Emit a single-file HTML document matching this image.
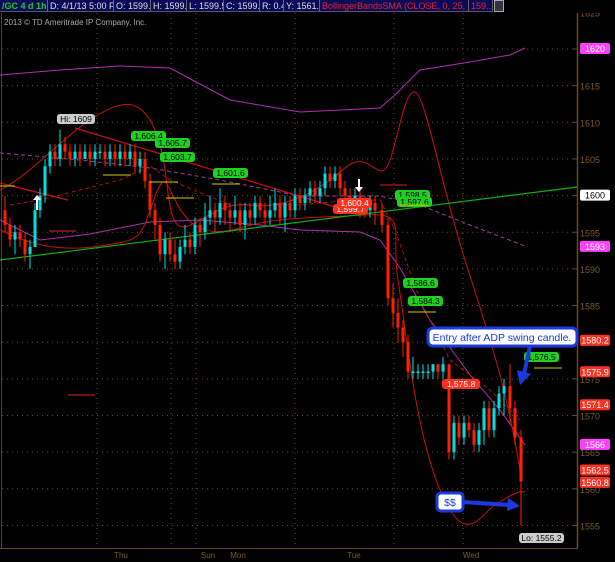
<!DOCTYPE html>
<html><head><meta charset="utf-8"><style>
body{margin:0;background:#000;width:615px;height:562px;overflow:hidden;font-family:"Liberation Sans",sans-serif}
#top{position:absolute;left:0;top:0;width:615px;height:13px;background:#000;font-size:9px;z-index:2}
#top div{position:absolute;top:0;height:12px;background:#0a0a5a;border-right:1px solid #666;border-bottom:1px solid #555;line-height:12px;color:#ddd;white-space:nowrap;overflow:hidden;padding-left:2px;box-sizing:border-box}
</style></head><body>
<div id="top">
<div style="left:0;width:48px;color:#2c2;font-weight:bold">/GC 4 d 1h</div>
<div style="left:48px;width:66px">D: 4/1/13 5:00 PM</div>
<div style="left:114px;width:37px">O: 1599.7</div>
<div style="left:151px;width:36px">H: 1599.9</div>
<div style="left:187px;width:37px">L: 1599.5</div>
<div style="left:224px;width:36px">C: 1599.7</div>
<div style="left:260px;width:24px">R: 0.4</div>
<div style="left:284px;width:36px">Y: 1561.8</div>
<div style="left:320px;width:149px;color:#e22">BollingerBandsSMA (CLOSE, 0, 25, -2.0, 2.0)</div>
<div style="left:469px;width:24px;color:#e22">159...</div>
<div style="left:494px;width:10px;background:#334;border:1px solid #aaa"></div>
</div>
<svg id="s" width="615" height="562" style="position:absolute;left:0;top:0" xmlns="http://www.w3.org/2000/svg" font-family="Liberation Sans, sans-serif">
</svg>
<script>
const s=document.getElementById('s');let h='';
const Y=p=>49+(1620-p)*7.33;
h+='<rect x="0" y="13" width="615" height="549" fill="#000"/>';
h+='<line x1="1.5" y1="13" x2="1.5" y2="548" stroke="#5a3f1a"/>';
h+='<line x1="577.5" y1="13" x2="577.5" y2="548" stroke="#6a4a20" stroke-width="1.5"/>';
h+='<line x1="0" y1="548.5" x2="578" y2="548.5" stroke="#6a4a20"/>';
h+='<text x="4" y="25" fill="#aaa" font-size="8">2013 © TD Ameritrade IP Company, Inc.</text>';
for(let p=1555;p<=1625;p+=5){const y=Y(p);h+=`<line x1="2" y1="${y}" x2="572" y2="${y}" stroke="#6a4a20" stroke-dasharray="1,4"/><line x1="572" y1="${y}" x2="577" y2="${y}" stroke="#6a4a20"/><text x="580" y="${y+4}" fill="#7a5a2a" font-size="9">${p}</text>`;}
[97,171,196,295,394,463].forEach(x=>h+=`<line x1="${x}" y1="13" x2="${x}" y2="548" stroke="#6a4a20" stroke-dasharray="1,4"/>`);
[['Thu',121],['Sun',208],['Mon',238],['Tue',354],['Wed',471]].forEach(a=>h+=`<text x="${a[1]}" y="558" fill="#7a5a2a" font-size="8" text-anchor="middle">${a[0]}</text>`);
h+='<polyline fill="none" stroke="#b030b0" points="0,75 60,70 120,66 170,68 230,100 300,112 380,108 395,95 420,70 470,62 510,55 525,48"/>';
h+='<polyline fill="none" stroke="#b030b0" points="0,220 40,240 90,234 150,222 200,220 260,225 300,230 360,232 380,240 400,268 430,320 470,375 500,410 525,445"/>';
h+='<polyline fill="none" stroke="#a040a0" stroke-dasharray="4,3" points="0,153 80,160 150,168 220,180 300,196 380,196 420,205 470,225 525,246"/>';
h+='<path fill="none" stroke="#c81010" d="M0,190 C30,175 60,140 90,120 S140,95 155,130 S165,215 178,225 S215,200 250,205 S320,190 345,168 S380,190 390,160 S405,90 415,92 S440,180 465,260 S505,380 520,470"/>';
h+='<path fill="none" stroke="#c81010" d="M0,230 C30,245 60,252 100,246 S140,240 152,205 S165,180 175,200 S200,240 240,228 S320,218 365,215 S390,230 398,280 S415,430 440,490 S480,515 495,505 S520,490 525,492"/>';
h+='<polyline fill="none" stroke="#b01010" stroke-dasharray="4,3" points="10,205 40,200 80,190 120,180 150,166 170,180 230,205 300,205 350,200 380,200 395,230 420,300 450,360 490,390 520,420"/>';
h+='<line x1="0" y1="260" x2="577" y2="187" stroke="#10b010" stroke-width="1.2"/>';
h+='<line x1="75" y1="128" x2="355" y2="213" stroke="#c81010" stroke-width="1.2"/>';
h+='<line x1="0" y1="183" x2="68" y2="200" stroke="#c81010" stroke-width="1.2"/>';
const C=[[5,1598,1596,1600,1595],[10,1596,1594,1597,1593],[15,1594,1595,1596,1592],[20,1595,1594,1596,1593],[25,1594,1592,1595,1591],[30,1592,1593,1594,1590],[35,1593,1598,1599,1593],[40,1598,1600,1601,1597],[45,1600,1604,1605,1599],[50,1604,1606,1607,1603],[55,1606,1605,1607,1604],[60,1605,1607,1609,1604],[65,1607,1606,1608,1605],[70,1606,1605,1607,1604],[75,1605,1606,1607,1604],[80,1606,1605,1607,1604],[85,1605,1606,1607,1605],[90,1606,1605,1607,1604],[95,1605,1606,1607,1604],[100,1606,1606,1607,1605],[105,1606,1605,1607,1604],[110,1605,1606,1607,1604],[115,1606,1605,1607,1604],[120,1605,1606,1607,1604],[125,1606,1605,1607,1604],[130,1605,1606,1607,1604],[135,1606,1604,1607,1603],[140,1604,1605,1606,1603],[145,1605,1602,1606,1601],[150,1602,1598,1603,1597],[155,1598,1596,1599,1594],[160,1596,1592,1597,1591],[165,1592,1594,1595,1590],[170,1594,1592,1595,1591],[175,1592,1591,1594,1590],[180,1591,1593,1594,1590],[185,1593,1594,1596,1592],[190,1594,1593,1595,1592],[195,1593,1596,1597,1592],[200,1596,1595,1597,1593],[205,1595,1597,1599,1594],[210,1597,1598,1600,1596],[215,1598,1597,1599,1595],[220,1597,1599,1601,1596],[225,1599,1598,1600,1596],[230,1598,1597,1599,1595],[235,1597,1598,1600,1596],[240,1598,1596,1599,1595],[245,1596,1598,1599,1594],[250,1598,1597,1599,1596],[255,1597,1599,1600,1596],[260,1599,1598,1600,1597],[265,1598,1597,1599,1596],[270,1597,1598,1600,1596],[275,1598,1599,1601,1597],[280,1599,1597,1600,1596],[285,1597,1599,1600,1595],[290,1599,1598,1600,1597],[295,1598,1600,1601,1597],[300,1600,1599,1601,1598],[305,1599,1600,1601,1598],[310,1600,1601,1602,1599],[315,1601,1600,1602,1599],[320,1600,1601,1602,1599],[325,1601,1603,1604,1600],[330,1603,1602,1604,1601],[335,1602,1603,1604,1601],[340,1603,1601,1604,1600],[345,1601,1600,1602,1599],[350,1600,1599,1601,1598],[355,1599,1600,1601,1598],[360,1600,1599,1601,1597],[365,1599,1598,1600,1597],[370,1598,1599,1600,1597],[375,1599,1598,1600,1596],[382,1598,1596,1599,1595],[388,1596,1586,1597,1585],[393,1586,1584,1588,1582],[398,1584,1582,1586,1580],[403,1582,1580,1583,1578],[408,1580,1576,1581,1575],[413,1576,1576,1578,1575],[418,1576,1576,1577,1575],[423,1576,1576,1577,1575],[428,1576,1576,1577,1575],[433,1576,1577,1577,1575],[438,1577,1576,1577,1575],[443,1576,1577,1578,1575],[449,1577,1565,1577,1564],[454,1565,1569,1570,1564],[459,1569,1567,1570,1566],[464,1567,1569,1570,1566],[469,1569,1568,1570,1567],[474,1568,1566,1569,1565],[479,1566,1568,1569,1565],[484,1568,1571,1572,1566],[489,1571,1568,1572,1567],[494,1568,1571,1572,1567],[499,1571,1573,1574,1570],[504,1573,1574,1575,1570],[510,1574,1571,1577,1569],[515,1571,1567,1572,1566],[521,1567,1561,1568,1555]];
C.forEach(c=>{const[x,o,cl,hi,lo]=c;const col=cl>=o?'#00e0e0':'#ff2000';const t=Y(Math.max(o,cl)),b=Y(Math.min(o,cl));h+=`<line x1="${x}" y1="${Y(hi)}" x2="${x}" y2="${Y(lo)}" stroke="${col}"/><rect x="${x-1.5}" y="${t}" width="3" height="${Math.max(1.5,b-t)}" fill="${col}"/>`;});
const lab=(x,y,t,bg,fg,w)=>{h+=`<rect x="${x}" y="${y}" width="${w}" height="10" rx="3" fill="${bg}"/><text x="${x+w/2}" y="${y+8}" fill="${fg}" font-size="8.5" text-anchor="middle">${t}</text>`;};
lab(57,114,'Hi: 1609','#ccc','#000',38);
lab(131,131,'1,606.4','#20d020','#000',35);lab(155,138,'1,605.7','#20d020','#000',35);lab(160,152,'1,603.7','#20d020','#000',35);lab(213,168,'1,601.6','#20d020','#000',35);
lab(395,190,'1,598.5','#20d020','#000',35);lab(397,197,'1,597.6','#20d020','#000',35);
lab(333,204,'1,599.7','#ff3020','#fff',35);lab(337,198,'1,600.4','#ff3020','#fff',35);
lab(403,278,'1,586.6','#20d020','#000',35);lab(408,296,'1,584.3','#20d020','#000',35);
lab(442,379,'1,575.8','#ff3020','#fff',38);lab(524,352,'1,576.5','#20d020','#000',35);
lab(519,533,'Lo: 1555.2','#ccc','#000',45);
[[103,175],[150,182],[166,198],[212,184],[400,205],[408,312],[534,368]].forEach(a=>h+=`<line x1="${a[0]}" y1="${a[1]}" x2="${a[0]+28}" y2="${a[1]}" stroke="#d0d000"/>`);
[[49,231],[380,185],[68,395]].forEach(a=>h+=`<line x1="${a[0]}" y1="${a[1]}" x2="${a[0]+27}" y2="${a[1]}" stroke="#e02020"/>`);
h+='<line x1="0" y1="186" x2="15" y2="186" stroke="#d0d000"/>';
h+='<path d="M37,195 l-4,5 h3 v10 h2 v-10 h3z" fill="#fff"/><path d="M359,192 l-4,-5 h3 v-8 h2 v8 h3z" fill="#fff"/>';
const rl=(p,t,bg,fg)=>{const y=Y(p);h+=`<rect x="580" y="${y-6}" width="30" height="11" rx="2" fill="${bg}"/><text x="595" y="${y+3}" fill="${fg}" font-size="9" text-anchor="middle">${t}</text>`;};
rl(1620,'1620','#ff40ff','#fff');rl(1600,'1600','#fff','#000');rl(1593,'1593','#ff40ff','#fff');
rl(1580.2,'1580.2','#ff3020','#fff');rl(1575.9,'1575.9','#ff3020','#fff');rl(1571.4,'1571.4','#ff3020','#fff');rl(1566,'1566','#ff40ff','#fff');rl(1562.5,'1562.5','#ff3020','#fff');rl(1560.8,'1560.8','#ff3020','#fff');
h+='<rect x="428" y="328" width="149" height="18" rx="5" fill="#fff" stroke="#1a3adf" stroke-width="3"/><text x="502" y="341" fill="#1a3adf" font-size="10.5" text-anchor="middle">Entry after ADP swing candle.</text>';
h+='<path d="M530,346 L524,374" stroke="#1a3adf" stroke-width="4"/><path d="M517,370 L520,385 L531,374z" fill="#1a3adf"/>';
h+='<rect x="437" y="493" width="26" height="18" rx="4" fill="#fff" stroke="#1a3adf" stroke-width="3"/><text x="450" y="506" fill="#1a3adf" font-size="10.5" text-anchor="middle">$$</text>';
h+='<path d="M463,502 L510,505" stroke="#1a3adf" stroke-width="4"/><path d="M508,498 L520,506 L507,511z" fill="#1a3adf"/>';
s.innerHTML=h;
</script>
</body></html>
